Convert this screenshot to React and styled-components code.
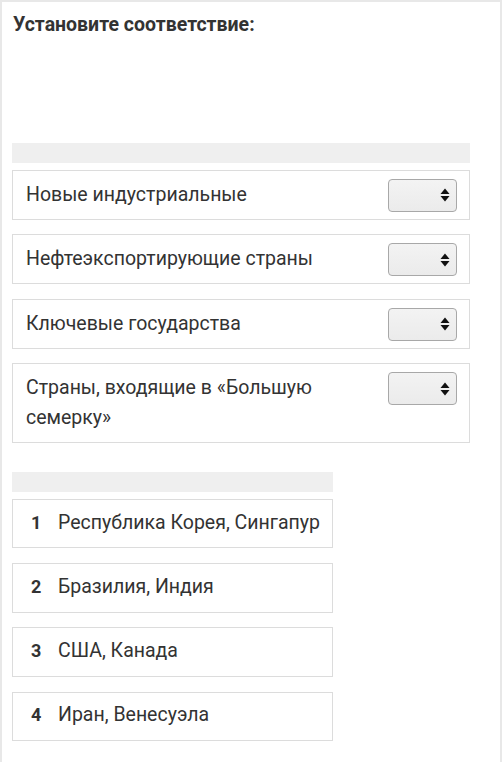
import React from "react";
import styled, { createGlobalStyle } from "styled-components";

const Global = createGlobalStyle`
  html, body { margin: 0; padding: 0; background: #fff; }
  body { font-family: Roboto, "Noto Sans", "Liberation Sans", sans-serif; color: #333; }
`;

const Panel = styled.div`
  box-sizing: border-box;
  width: 502px;
  min-height: 762px;
  border: 2px solid #e8e8e8;
  border-bottom: none;
  padding: 10px 0 20px 10px;
`;

const Title = styled.h2`
  margin: 0 0 105px 1px;
  font-size: 19.5px;
  line-height: 26px;
  font-weight: 700;
  color: #333;
`;

const Section = styled.div`
  width: ${(p) => p.$width}px;
  display: flex;
  flex-direction: column;
  gap: ${(p) => p.$gap}px;
  margin-bottom: ${(p) => p.$mb || 0}px;
`;

const HeadBar = styled.div`
  height: 20px;
  background: #efefef;
  margin-bottom: -8px;
`;

const Row = styled.div`
  box-sizing: border-box;
  display: flex;
  align-items: flex-start;
  justify-content: space-between;
  gap: 16px;
  border: 1px solid #dcdcdc;
  padding: 9px 12px 9px 13px;
  background: #fff;
`;

const RowText = styled.div`
  font-size: 19.5px;
  line-height: 30px;
  color: #333;
  flex: 1;
`;

const SelectBox = styled.div`
  box-sizing: border-box;
  flex: none;
  width: 69px;
  height: 33px;
  margin: -1px 0 -2px;
  border: 1px solid #a8a8a8;
  border-radius: 4px;
  background: linear-gradient(#f3f3f3, #ebebeb);
  display: flex;
  align-items: center;
  justify-content: flex-end;
  padding-right: 6px;
`;

const Item = styled.div`
  box-sizing: border-box;
  display: flex;
  align-items: center;
  height: 49.5px;
  border: 1px solid #dcdcdc;
  padding-left: 18px;
  background: #fff;
`;

const Num = styled.span`
  width: 27px;
  flex: none;
  font-size: 18px;
  font-weight: 700;
  color: #333;
  margin-top: -3px;
`;

const ItemText = styled.span`
  font-size: 19.5px;
  color: #333;
  margin-top: -3px;
`;

const Arrows = () => (
  <svg width="10" height="14" viewBox="0 0 10 14">
    <path d="M5 0.5 L9.5 6 L0.5 6 Z" fill="#111" />
    <path d="M0.5 8 L9.5 8 L5 13.5 Z" fill="#111" />
  </svg>
);

const questions = [
  "Новые индустриальные",
  "Нефтеэкспортирующие страны",
  "Ключевые государства",
  "Страны, входящие в «Большую семерку»",
];

const answers = [
  "Республика Корея, Сингапур",
  "Бразилия, Индия",
  "США, Канада",
  "Иран, Венесуэла",
];

export default function App() {
  return (
    <>
      <Global />
      <Panel>
        <Title>Установите соответствие:</Title>
        <Section $width={458} $gap={14.5} $mb={29}>
          <HeadBar />
          {questions.map((q) => (
            <Row key={q}>
              <RowText>{q}</RowText>
              <SelectBox>
                <Arrows />
              </SelectBox>
            </Row>
          ))}
        </Section>
        <Section $width={321} $gap={14.8}>
          <HeadBar />
          {answers.map((a, i) => (
            <Item key={a}>
              <Num>{i + 1}</Num>
              <ItemText>{a}</ItemText>
            </Item>
          ))}
        </Section>
      </Panel>
    </>
  );
}
